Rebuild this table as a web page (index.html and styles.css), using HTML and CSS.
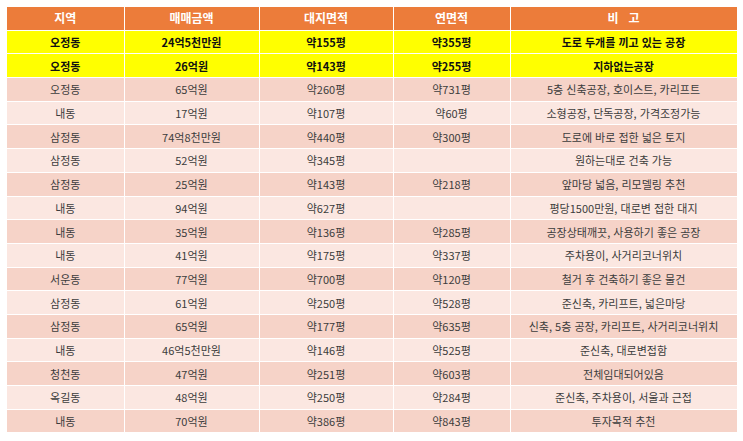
FILE: index.html
```html
<!DOCTYPE html>
<html lang="ko">
<head>
<meta charset="utf-8">
<link rel="stylesheet" href="styles.css">
</head>
<body>
<table class="grid">
<colgroup>
<col class="c1"><col class="c2"><col class="c3"><col class="c4"><col class="c5">
</colgroup>
<thead>
<tr><th>지역</th><th>매매금액</th><th>대지면적</th><th>연면적</th><th>비&nbsp;&nbsp;&nbsp;고</th></tr>
</thead>
<tbody>
<tr class="hl"><td>오정동</td><td>24억5천만원</td><td>약155평</td><td>약355평</td><td>도로 두개를 끼고 있는 공장</td></tr>
<tr class="hl"><td>오정동</td><td>26억원</td><td>약143평</td><td>약255평</td><td>지하없는공장</td></tr>
<tr class="dk"><td>오정동</td><td>65억원</td><td>약260평</td><td>약731평</td><td>5층 신축공장, 호이스트, 카리프트</td></tr>
<tr class="lt"><td>내동</td><td>17억원</td><td>약107평</td><td>약60평</td><td>소형공장, 단독공장, 가격조정가능</td></tr>
<tr class="dk"><td>삼정동</td><td>74억8천만원</td><td>약440평</td><td>약300평</td><td>도로에 바로 접한 넓은 토지</td></tr>
<tr class="lt"><td>삼정동</td><td>52억원</td><td>약345평</td><td></td><td>원하는대로 건축 가능</td></tr>
<tr class="dk"><td>삼정동</td><td>25억원</td><td>약143평</td><td>약218평</td><td>앞마당 넓음, 리모델링 추천</td></tr>
<tr class="lt"><td>내동</td><td>94억원</td><td>약627평</td><td></td><td>평당1500만원, 대로변 접한 대지</td></tr>
<tr class="dk"><td>내동</td><td>35억원</td><td>약136평</td><td>약285평</td><td>공장상태깨끗, 사용하기 좋은 공장</td></tr>
<tr class="lt"><td>내동</td><td>41억원</td><td>약175평</td><td>약337평</td><td>주차용이, 사거리코너위치</td></tr>
<tr class="dk"><td>서운동</td><td>77억원</td><td>약700평</td><td>약120평</td><td>철거 후 건축하기 좋은 물건</td></tr>
<tr class="lt"><td>삼정동</td><td>61억원</td><td>약250평</td><td>약528평</td><td>준신축, 카리프트, 넓은마당</td></tr>
<tr class="dk"><td>삼정동</td><td>65억원</td><td>약177평</td><td>약635평</td><td>신축, 5층 공장, 카리프트, 사거리코너위치</td></tr>
<tr class="lt"><td>내동</td><td>46억5천만원</td><td>약146평</td><td>약525평</td><td>준신축, 대로변접함</td></tr>
<tr class="dk"><td>청천동</td><td>47억원</td><td>약251평</td><td>약603평</td><td>전체임대되어있음</td></tr>
<tr class="lt"><td>옥길동</td><td>48억원</td><td>약250평</td><td>약284평</td><td>준신축, 주차용이, 서울과 근접</td></tr>
<tr class="dk"><td>내동</td><td>70억원</td><td>약386평</td><td>약843평</td><td>투자목적 추천</td></tr>
</tbody>
</table>
</body>
</html>
```
FILE: styles.css
```css
html, body {
  margin: 0;
  background: #ffffff;
}
body {
  padding: 7px 6px 0 7px;
  font-family: "Noto Sans CJK KR", "Noto Sans", sans-serif;
  font-size: 11px;
  color: #3c3c3c;
}
.grid {
  border-collapse: collapse;
  table-layout: fixed;
  width: 730px;
}
.c1 { width: 117px; }
.c2 { width: 135px; }
.c3 { width: 134px; }
.c4 { width: 117px; }
.c5 { width: 227px; }
.grid th, .grid td {
  border: 1px solid #ffffff;
  text-align: center;
  padding: 0;
  height: 22.7px;
  line-height: 14px;
  white-space: nowrap;
}
.grid tr:first-child th { border-top: none; }
.grid th:first-child, .grid td:first-child { border-left: none; }
.grid th {
  background: #ec7c3a;
  color: #ffffff;
  font-weight: 700;
  font-size: 12px;
}
.hl td {
  background: #ffff00;
  color: #111111;
  font-weight: 700;
}
.dk td { background: #f6d3c8; }
.lt td { background: #fbe7e1; }
```
